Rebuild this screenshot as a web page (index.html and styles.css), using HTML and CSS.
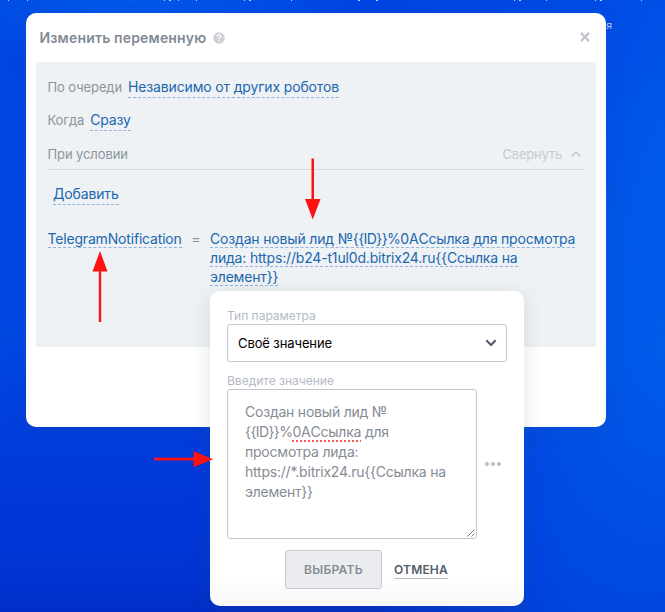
FILE: index.html
```html
<!DOCTYPE html>
<html lang="ru">
<head>
<meta charset="utf-8">
<title>Изменить переменную</title>
<link rel="stylesheet" href="styles.css">
</head>
<body>
<svg class="ticks" width="665" height="1" viewBox="0 0 665 1" fill="#b5cdfa"><path d="M8 0h1v1h-1zM27 0h1v1h-1zM164 0h1v1h-1zM169 0h2v1h-2zM178 0h1v1h-1zM196 0h1v1h-1zM244 0h1v1h-1zM249 0h2v1h-2zM291 0h1v1h-1zM358 0h2v1h-2zM376 0h2v1h-2zM514 0h1v1h-1zM519 0h2v1h-2zM546 0h1v1h-1zM595 0h1v1h-1zM600 0h2v1h-2zM641 0h1v1h-1z"/></svg>
<span class="behind">ия</span>
<main class="dialog">
  <header class="dialog-head">
    <h1>Изменить переменную</h1>
    <svg class="help" width="12" height="12" viewBox="0 0 12 12"><circle cx="6" cy="6" r="5.8" fill="#cdd0d4"/><path d="M4.2 4.7C4.2 3.5 5 2.9 6 2.9s1.8.6 1.8 1.5c0 1.2-1.7 1.2-1.7 2.5M6.1 7.9v1.3" fill="none" stroke="#fff" stroke-width="1.3"/></svg>
    <svg class="close" width="10" height="10" viewBox="0 0 10 10"><path d="M.9.9l8.200 8.200M9.100.9L.9 9.100" stroke="#c0c4cc" stroke-width="2.200"/></svg>
  </header>
  <section class="panel">
    <div class="row first"><span class="label">По очереди</span><a class="link">Независимо от других роботов</a></div>
    <div class="row second"><span class="label">Когда</span><a class="link">Сразу</a></div>
    <div class="row condition"><span class="label">При условии</span><span class="collapse">Свернуть</span><svg width="12" height="8" viewBox="0 0 12 8"><path d="M1.700 6.400L6 2.100l4.300 4.300" fill="none" stroke="#c3c9ce" stroke-width="1.700"/></svg></div>
    <div class="row add"><a class="link">Добавить</a></div>
    <div class="assign">
      <div class="name"><a class="link">TelegramNotification</a></div>
      <span class="eq">=</span>
      <div class="value"><a class="link">Создан новый лид №<span class="token">{{ID}}%</span>0AСсылка для просмотра<br>лида: https://b24-t1ul0d.bitrix24.ru{{Ссылка на<br>элемент}}</a></div>
    </div>
  </section>
</main>
<aside class="popup">
  <div class="field-label">Тип параметра</div>
  <div class="select"><span>Своё значение</span><svg width="12" height="8" viewBox="0 0 12 8"><path d="M1.300 1.200L6 5.900l4.700-4.700" fill="none" stroke="#525c69" stroke-width="2.100"/></svg></div>
  <div class="field-label second-label">Введите значение</div>
  <div class="input-row">
    <div class="textarea">Создан новый лид №<br><span class="token">{{ID}}%</span><span class="misspelled">0AСсылка</span> для<br>просмотра лида:<br>https://*.bitrix24.ru{{Ссылка на<br>элемент}}
      <svg class="grip" width="8" height="8" viewBox="0 0 8 8"><path d="M.5 7.500l7-7M4.500 7.500l3-3" stroke="#555" stroke-width=".8"/></svg>
    </div>
    <svg class="dots" width="16" height="4" viewBox="0 0 16 4" fill="#b9bdc3"><circle cx="2" cy="2" r="2"/><circle cx="8" cy="2" r="2"/><circle cx="14" cy="2" r="2"/></svg>
  </div>
  <div class="actions"><button>ВЫБРАТЬ</button><a class="cancel">ОТМЕНА</a></div>
</aside>
<svg class="arrows" width="665" height="612" viewBox="0 0 665 612" fill="#ff1212"><path d="M311.500 158.500h2.500v40.500h6.500L312.800 219.500 305 199h6.500zM98.800 322h2.400V271.500h6.300L100 251 92.500 271.500h6.300zM154 457.800h39.500V451L213 459.200 193.500 467.200V460.600H154z"/></svg>
</body>
</html>
```

FILE: styles.css
```css
* { box-sizing: border-box; }
body {
  margin: 0;
  position: relative;
  width: 665px;
  height: 612px;
  overflow: hidden;
  font-family: Inter, "Liberation Sans", sans-serif;
  background:
    radial-gradient(ellipse 90px 330px at 665px 170px, rgba(0, 104, 242, .4), transparent),
    radial-gradient(ellipse 220px 60px at 130px 0, rgba(0, 94, 235, .8), transparent),
    radial-gradient(ellipse 190px 300px at 665px 350px, rgba(0, 92, 232, .8), transparent),
    linear-gradient(90deg, transparent 55%, rgba(0, 75, 228, .8) 85%),
    linear-gradient(180deg, #0045e4 0%, #0048e2 55%, #003adb 75%, #0035d4 92%, #002ec8 100%);
}
svg { display: block; flex: none; }
.ticks { position: absolute; left: 0; top: 0; }
.behind { position: absolute; left: 600px; top: 19px; font-size: 10.5px; line-height: 14px; color: #b9d0fb; }
.dialog {
  position: absolute; left: 26px; top: 13px; width: 580px; height: 414px;
  padding: 0 10px; border-radius: 10px; background: #fff;
  box-shadow: 0 4px 18px rgba(60, 80, 100, .12);
}
.dialog-head { display: flex; align-items: center; height: 49px; padding: 1px 6px 0 3.5px; }
h1 { margin: 0; font-size: 14px; line-height: 20px; font-weight: 600; color: #828b95; letter-spacing: .17px; }
.help { margin-left: 7px; }
.close { margin-left: auto; margin-bottom: 3px; }
.panel { height: 285px; padding: 14px 12px 0 11.5px; background: #eef2f4; border-radius: 2px; }
.row { display: flex; align-items: center; }
.label, .collapse { font-size: 13px; line-height: 20px; color: #8c949d; letter-spacing: -.1px; }
.label { margin-right: 6px; }
.first, .second { height: 22px; }
.first .link, .second .link, .add .link { padding-bottom: 1px; margin-bottom: -1px; }
.second { margin-top: 11px; }
.link { font-size: 14px; line-height: 19px; color: #2067b0; border-bottom: 1px dashed #91b3dc; letter-spacing: -.15px; }
.condition { height: 26px; margin-top: 13px; padding-right: 2px; padding-bottom: 5px; border-bottom: 1px solid #d7dce1; }
.collapse { margin-left: auto; margin-right: 8px; color: #c6cbd0; letter-spacing: -.2px; }
.add { margin-top: 13px; height: 22px; padding-left: 5.5px; }
.assign { display: grid; grid-template-columns: 134.5px 28px 1fr; margin-top: 24px; font-size: 14px; line-height: 19px; white-space: nowrap; }
.name .link { letter-spacing: -.18px; }
.value .link { letter-spacing: -.17px; }
.link .token, .textarea .token { letter-spacing: -.58px; }
.eq { text-align: center; color: #8c949d; }
.popup {
  position: absolute; left: 210px; top: 291px; width: 314px; height: 315px;
  padding: 17px 17px 0; border-radius: 10px;
  background: linear-gradient(#fff 90%, #f8f8f8);
  box-shadow: 0 4px 20px rgba(60, 80, 90, .16);
}
.field-label { font-size: 12px; line-height: 16px; color: #b3b9c7; }
.select { display: flex; align-items: center; justify-content: space-between; height: 38px; padding: 0 9.5px 0 10px; border: 1px solid #c3c9d0; border-radius: 3px; font-size: 13px; color: #000; letter-spacing: -.1px; }
.second-label { margin-top: 11px; }
.input-row { display: flex; align-items: center; gap: 8px; }
.textarea { position: relative; width: 250px; height: 150px; padding: 12px 17px; border: 1px solid #c3c9d0; border-radius: 3px; font-size: 14px; line-height: 20px; color: #858c95; white-space: nowrap; letter-spacing: -.22px; }
.misspelled { text-decoration: underline dotted #f15a5a 1.5px; text-underline-offset: 3px; text-decoration-skip-ink: none; }
.grip { position: absolute; right: 1px; bottom: 1px; }
.actions { display: flex; align-items: center; margin: 11px 0 0 58px; }
button { width: 97px; height: 39px; padding: 0; border: 1px solid #c6cbd1; border-radius: 3px; background: #ebecef; font: 600 12px Inter, sans-serif; color: #858c95; letter-spacing: .3px; }
.cancel { margin-left: 12px; font-size: 12px; line-height: 17px; font-weight: 600; color: #535c69; border-bottom: 1px solid #babec3; letter-spacing: .18px; }
.arrows { position: absolute; left: 0; top: 0; pointer-events: none; }
```
